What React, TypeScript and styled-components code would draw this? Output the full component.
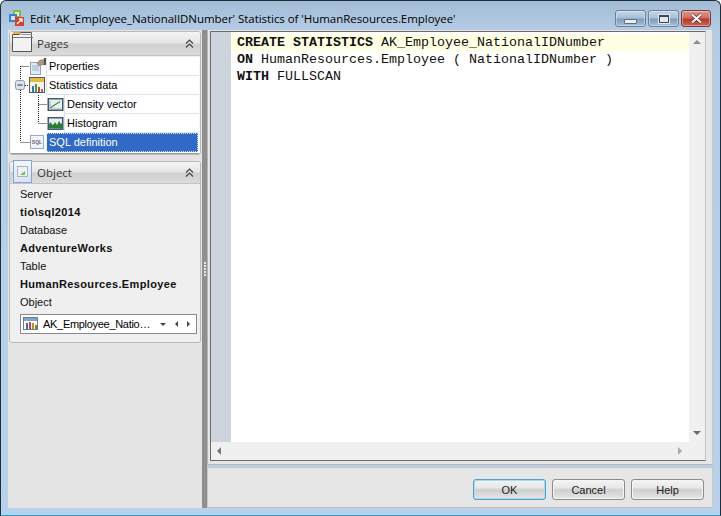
import React from "react";
import styled, { createGlobalStyle } from "styled-components";

const Global = createGlobalStyle`
  html, body { margin: 0; padding: 0; background: #fff; }
  * { box-sizing: border-box; }
`;

const UI = `"Liberation Sans", Arial, sans-serif`;

const Window = styled.div`
  width: 721px;
  height: 516px;
  display: flex;
  flex-direction: column;
  padding: 0 7px 7px;
  overflow: hidden;
  border: 1px solid #1c2f3a;
  border-bottom-color: #12a5c4;
  border-radius: 6px 6px 0 0;
  background: linear-gradient(180deg, #a3bcd6 0, #b4cce5 30px, #b9d1ea 100%);
  font-family: ${UI};
  font-size: 11px;
  color: #000;
`;
const TitleBar = styled.div`
  height: 29px;
  flex: none;
  display: flex;
  align-items: flex-start;
`;
const AppIcon = styled.svg`
  width: 16px;
  height: 16px;
  margin: 9px 5px 0 1px;
  flex: none;
`;
const TitleText = styled.div`
  flex: 1;
  margin-top: 10px;
  font-family: "Open Sans", sans-serif;
  font-size: 11.5px;
  line-height: 16px;
  white-space: nowrap;
  letter-spacing: -0.05px;
`;
const Caption = styled.div`
  display: flex;
  gap: 2px;
  margin: 9px 2px 0 0;
`;
const CaptionButton = styled.div<{ $close?: boolean }>`
  width: ${(p) => (p.$close ? 30 : 31)}px;
  height: 17px;
  display: flex;
  align-items: center;
  justify-content: center;
  border: 1px solid ${(p) => (p.$close ? "#7a3a3a" : "#6f8094")};
  border-radius: 3px;
  box-shadow: inset 0 0 0 1px rgba(255, 255, 255, 0.35);
  background: ${(p) =>
    p.$close
      ? "linear-gradient(180deg,#dd9a8f 0,#cf6f60 45%,#b33a2c 55%,#c9665a 100%)"
      : "linear-gradient(180deg,#c5d6e8 0,#a9c0d8 45%,#7f9dbc 55%,#a5bfd8 100%)"};
`;
const MinGlyph = styled.div`
  width: 13px;
  height: 5px;
  margin-top: 5px;
  background: #e9eef3;
  border: 1px solid #5d6e80;
  border-radius: 1px;
`;
const RestoreGlyph = styled.div`
  width: 10px;
  height: 8px;
  background: #dfe7ef;
  border: 1px solid #39485a;
  border-top-width: 2px;
  box-shadow: 0 0 0 1px #dfe7ef;
  position: relative;
`;

const Client = styled.div`
  flex: 1;
  min-height: 0;
  display: flex;
`;
const Sidebar = styled.div`
  width: 194px;
  flex: none;
  background: #e4e4e4;
  padding: 1px 1px 0 1px;
  display: flex;
  flex-direction: column;
  gap: 6px;
`;
const Splitter = styled.div`
  width: 5px;
  flex: none;
  background: #8f8f8f;
  display: flex;
  flex-direction: column;
  align-items: center;
  justify-content: center;
  gap: 1px;
`;
const Grip = styled.span`
  width: 2px;
  height: 2px;
  background: #e6e6e6;
`;
const Panel = styled.section`
  border: 1px solid #b9b9b9;
  border-radius: 3px;
  background: #efefef;
  box-shadow: inset 0 0 0 1px #f6f6f6;
`;
const PanelHead = styled.div<{ $h: number }>`
  height: ${(p) => p.$h}px;
  display: flex;
  align-items: center;
  position: relative;
  padding-left: 27px;
  font-family: "Open Sans", sans-serif;
  font-size: 11.5px;
  color: #33383f;
  background: linear-gradient(180deg, #f4f4f4 0, #e6e6e6 45%, #d0d0d0 55%, #dcdcdc 100%);
  border-bottom: 1px solid #c4c4c4;
  border-radius: 2px 2px 0 0;
`;
const HeadIcon = styled.svg`
  position: absolute;
  left: 1px;
  top: -1px;
`;
const ObjectTab = styled.div`
  position: absolute;
  left: 3px;
  top: -2px;
  width: 19px;
  height: 23px;
  border: 1px solid #7fa3d6;
  background: linear-gradient(180deg, #f4f7fb, #dbe3ef);
  display: flex;
  align-items: center;
  justify-content: center;
`;
const Chevrons = styled.svg`
  position: absolute;
  right: 5px;
  top: 50%;
  margin-top: -5px;
`;
const TreeWrap = styled.div`
  position: relative;
  margin: 1px 1px 0 1px;
  height: 97px;
  background: #fff;
  border-bottom: 1px solid #9a9a9a;
`;
const TreeLines = styled.svg`
  position: absolute;
  left: 0;
  top: 0;
  pointer-events: none;
`;
const TreeRow = styled.div<{ $level: number }>`
  height: 19px;
  padding-left: ${(p) => (p.$level ? 36 : 18)}px;
  display: flex;
  align-items: center;
`;
const RowIcon = styled.svg`
  width: 17px;
  height: 17px;
  flex: none;
`;
const RowText = styled.div<{ $selected?: boolean }>`
  flex: 1;
  align-self: stretch;
  display: flex;
  align-items: center;
  padding-left: 2px;
  margin-right: ${(p) => (p.$selected ? "1px" : "0")};
  line-height: 18px;
  border-left: 1px solid ${(p) => (p.$selected ? "#fff" : "#dce3ef")};
  border-bottom: 1px solid ${(p) => (p.$selected ? "transparent" : "#dce3ef")};
  color: ${(p) => (p.$selected ? "#fff" : "#000")};
  background: ${(p) => (p.$selected ? "#316ac5" : "#fff")};
  outline: ${(p) => (p.$selected ? "1px dotted #cfe0ff" : "none")};
  outline-offset: -1px;
`;
const ObjectBody = styled.div`
  padding: 1px 0 8px 10px;
  background: #efefef;
  border-radius: 0 0 3px 3px;
`;
const Label = styled.div<{ $bold?: boolean }>`
  height: 18px;
  line-height: 18px;
  color: #111;
  font-weight: ${(p) => (p.$bold ? 700 : 400)};
  letter-spacing: ${(p) => (p.$bold ? "0.35px" : "0")};
  font-size: 11px;
  white-space: nowrap;
`;
const Combo = styled.div`
  width: 177px;
  height: 20px;
  margin-top: 3px;
  border: 1px solid #8a8a8a;
  background: #fff;
  display: flex;
  align-items: center;
  padding: 0 3px 0 2px;
`;
const ComboText = styled.div`
  flex: 1;
  margin-left: 4px;
  white-space: nowrap;
  letter-spacing: -0.3px;
`;
const ComboArrows = styled.div`
  display: flex;
  align-items: center;
  gap: 9px;
  margin-right: 3px;
`;
const Tri = styled.i<{ $dir: "up" | "down" | "left" | "right"; $c?: string; $s?: number }>`
  display: block;
  width: 0;
  height: 0;
  border-style: solid;
  border-color: transparent;
  border-width: ${(p) => p.$s ?? 4}px;
  ${(p) => {
    const c = p.$c ?? "#444";
    if (p.$dir === "up") return `border-top-width:0;border-bottom-color:${c};`;
    if (p.$dir === "down") return `border-bottom-width:0;border-top-color:${c};`;
    if (p.$dir === "left") return `border-left-width:0;border-right-color:${c};`;
    return `border-right-width:0;border-left-color:${c};`;
  }}
`;

const Main = styled.div`
  flex: 1;
  min-width: 0;
  display: flex;
  flex-direction: column;
  gap: 2px;
`;
const EditorPanel = styled.div`
  height: 435px;
  flex: none;
  padding: 1px 6px 3px 2px;
  background: #e6e6e6;
  border-left: 1px solid #b5b5b5;
  border-right: 1px solid #c8c8c8;
  border-bottom: 1px solid #b5b5b5;
`;
const EditorFrame = styled.div`
  height: 100%;
  border: 1px solid #6b6b6b;
  border-right-color: #c0c0c0;
  background: #fff;
  display: grid;
  grid-template-columns: 1fr 16px;
  grid-template-rows: 1fr 18px;
`;
const CodeArea = styled.div`
  display: flex;
  min-height: 0;
  min-width: 0;
`;
const Gutter = styled.div`
  width: 20px;
  flex: none;
  background: #ced4de;
`;
const CodeBody = styled.div`
  flex: 1;
  padding-top: 2px;
  font-family: "Liberation Mono", "Courier New", monospace;
  font-size: 13.33px;
  color: #111;
`;
const CodeLine = styled.div<{ $active?: boolean }>`
  height: 17px;
  line-height: 17px;
  padding-left: 6px;
  white-space: pre;
  background: ${(p) => (p.$active ? "#ffffe3" : "transparent")};
  b { font-weight: 700; }
`;
const VScroll = styled.div`
  background: #f0f0f0;
  display: flex;
  flex-direction: column;
  justify-content: space-between;
  align-items: center;
  padding: 8px 0 7px;
`;
const HScroll = styled.div`
  background: #f0f0f0;
  display: flex;
  justify-content: space-between;
  align-items: center;
  padding: 0 7px 0 6px;
`;
const Corner = styled.div`
  background: #f0f0f0;
`;
const Footer = styled.div`
  flex: 1;
  display: flex;
  justify-content: flex-end;
  align-items: flex-start;
  gap: 6px;
  padding: 11px 8px 0 0;
  background: #e6e6e6;
  border: 1px solid #c8c8c8;
  border-bottom-color: #bdbdbd;
  border-radius: 2px;
`;
const Button = styled.div<{ $default?: boolean }>`
  width: 73px;
  height: 21px;
  display: flex;
  align-items: center;
  justify-content: center;
  border: 1px solid ${(p) => (p.$default ? "#5b9cc9" : "#8c8c8c")};
  border-radius: 3px;
  color: #222;
  font-size: 11px;
  background: linear-gradient(180deg, #f4f4f4 0, #e8e8e8 40%, #cfcfcf 52%, #dcdcdc 80%, #e8e8e8 100%);
  box-shadow: inset 0 0 0 1px ${(p) => (p.$default ? "#a6dcf4" : "#f5f5f5")};
`;

const Chev = () => (
  <Chevrons width="11" height="10" viewBox="0 0 11 10">
    <path d="M2 4.5 5.5 1 9 4.5M2 8.5 5.5 5 9 8.5" fill="none" stroke="#444" strokeWidth="1.2" />
  </Chevrons>
);
const Properties = () => (
  <RowIcon viewBox="0 0 17 17">
    <rect x="1.5" y="4.5" width="10" height="12" fill="#dfe8f5" stroke="#8fa3bd" />
    <path d="M3 8h7M3 10h7M3 12h7" stroke="#9db4d3" />
    <path d="M8 5l3-3h2l2-1v6h-3l-2 1z" fill="#b09a7e" stroke="#7a6a55" strokeWidth=".5" />
    <rect x="15" y="0" width="2" height="7" fill="#555" />
  </RowIcon>
);
const Stats = () => (
  <RowIcon viewBox="0 0 17 17">
    <rect x=".5" y=".5" width="15" height="15" fill="#f7f3e6" stroke="#4f5c6e" />
    <rect x="1" y="1" width="14" height="4" fill="#e8b93f" />
    <rect x="3" y="9" width="2" height="6" fill="#3d6fb0" />
    <rect x="6" y="7" width="2" height="8" fill="#4c9a4a" />
    <rect x="9" y="10" width="2" height="5" fill="#c9463d" />
    <rect x="12" y="12" width="2" height="3" fill="#7d7d7d" />
  </RowIcon>
);
const Density = () => (
  <RowIcon viewBox="0 0 17 17">
    <rect x=".5" y="2" width="16" height="13" fill="#3f5a73" />
    <rect x="2" y="3.5" width="13" height="10" fill="#e9eef2" />
    <path d="M3 12 13 5.5" stroke="#2f9a3c" strokeWidth="1.3" />
    <path d="M3 5v8h11" stroke="#a5a5a5" fill="none" />
  </RowIcon>
);
const Histogram = () => (
  <RowIcon viewBox="0 0 17 17">
    <rect x=".5" y="2" width="16" height="13" fill="#3f5a73" />
    <rect x="2" y="3.5" width="13" height="10" fill="#e9eef2" />
    <path d="M2 13.5V9l2-2 1 3 2-1 1-2 2 3 2-4 2 3 1-1v5.5z" fill="#2a7d32" />
  </RowIcon>
);
const Sql = () => (
  <RowIcon viewBox="0 0 17 17">
    <rect x="1.5" y="1.5" width="13" height="13" fill="#f0f4fb" stroke="#98a8c8" />
    <text x="8" y="10" fontSize="5" fontWeight="700" textAnchor="middle" fill="#666" fontFamily="Liberation Sans">SQL</text>
  </RowIcon>
);

export default function App() {
  return (
    <>
      <Global />
      <Window>
        <TitleBar>
          <AppIcon viewBox="0 0 16 16">
            <rect x="4" y="0" width="8" height="8" fill="#7bbf3f" />
            <rect x="6" y="2" width="4" height="4" fill="#dff0c8" />
            <rect x="0" y="4" width="8" height="8" fill="#3a7fd0" />
            <rect x="2" y="6" width="4" height="4" fill="#cfe2f7" />
            <rect x="6" y="7" width="9" height="9" fill="#d8402a" />
            <path d="M8 14l5-5M10 9h3v3" stroke="#fff" strokeWidth="1.3" fill="none" />
          </AppIcon>
          <TitleText>Edit 'AK_Employee_NationalIDNumber' Statistics of 'HumanResources.Employee'</TitleText>
          <Caption>
            <CaptionButton><MinGlyph /></CaptionButton>
            <CaptionButton><RestoreGlyph /></CaptionButton>
            <CaptionButton $close>
              <svg width="15" height="11" viewBox="0 0 15 11">
                <path d="M3 1.5 12 9.5M12 1.5 3 9.5" stroke="#5a2a2a" strokeWidth="3.4" />
                <path d="M3 1.5 12 9.5M12 1.5 3 9.5" stroke="#f4f4f4" strokeWidth="2.2" />
              </svg>
            </CaptionButton>
          </Caption>
        </TitleBar>
        <Client>
          <Sidebar>
            <Panel>
              <PanelHead $h={24}>
                <HeadIcon width="24" height="22" viewBox="0 0 24 22">
                  <path d="M1.5 20.5V3.5h7l1-2h11v19z" fill="#f2f2f2" stroke="#555" />
                  <path d="M2 6.5h20" stroke="#777" />
                  <path d="M10 3.5h11" stroke="#999" />
                  <path d="M2 2h7" stroke="#e0b040" strokeWidth="2" />
                </HeadIcon>
                Pages
                <Chev />
              </PanelHead>
              <TreeWrap>
                <TreeLines width="50" height="96">
                  <g stroke="#222" strokeDasharray="1 1" fill="none">
                    <path d="M9.5 9V85M9.5 9.5H18" />
                    <path d="M14 28.5H18" />
                    <path d="M9.5 85.5H19" />
                    <path d="M27.5 38V66M27.5 47.5H36M27.5 66.5H36" />
                  </g>
                  <rect x="4.5" y="23.5" width="9" height="9" rx="2" fill="#dfe4ec" stroke="#8b97a8" />
                  <path d="M6.5 28h5" stroke="#333" />
                </TreeLines>
                <TreeRow $level={0}><Properties /><RowText>Properties</RowText></TreeRow>
                <TreeRow $level={0}><Stats /><RowText>Statistics data</RowText></TreeRow>
                <TreeRow $level={1}><Density /><RowText>Density vector</RowText></TreeRow>
                <TreeRow $level={1}><Histogram /><RowText>Histogram</RowText></TreeRow>
                <TreeRow $level={0}><Sql /><RowText $selected>SQL definition</RowText></TreeRow>
              </TreeWrap>
            </Panel>
            <Panel>
              <PanelHead $h={22}>
                <ObjectTab>
                  <svg width="11" height="11" viewBox="0 0 11 11">
                    <rect x=".5" y=".5" width="10" height="10" fill="#eef1f5" stroke="#a9b4c2" />
                    <path d="M3 9 8 5v4z" fill="#6cc24a" />
                  </svg>
                </ObjectTab>
                Object
                <Chev />
              </PanelHead>
              <ObjectBody>
                <Label>Server</Label>
                <Label $bold>tio\sql2014</Label>
                <Label>Database</Label>
                <Label $bold>AdventureWorks</Label>
                <Label>Table</Label>
                <Label $bold>HumanResources.Employee</Label>
                <Label>Object</Label>
                <Combo>
                  <svg width="16" height="14" viewBox="0 0 16 14">
                    <rect x=".5" y=".5" width="14" height="12" fill="#fff" stroke="#6d7a8c" />
                    <rect x="1" y="1" width="13" height="3" fill="#7aa6d8" />
                    <rect x="3" y="6" width="2" height="6" fill="#3d6fb0" />
                    <rect x="6" y="5" width="2" height="7" fill="#c9463d" />
                    <rect x="9" y="6" width="2" height="6" fill="#d9822b" />
                    <rect x="12" y="8" width="2" height="4" fill="#4c9a4a" />
                  </svg>
                  <ComboText>AK_Employee_Natio…</ComboText>
                  <ComboArrows>
                    <Tri $dir="down" $s={3} />
                    <Tri $dir="left" $s={3} />
                    <Tri $dir="right" $s={3} />
                  </ComboArrows>
                </Combo>
              </ObjectBody>
            </Panel>
          </Sidebar>
          <Splitter>
            <Grip /><Grip /><Grip /><Grip /><Grip />
          </Splitter>
          <Main>
            <EditorPanel>
              <EditorFrame>
                <CodeArea>
                  <Gutter />
                  <CodeBody>
                    <CodeLine $active><b>CREATE STATISTICS</b> AK_Employee_NationalIDNumber</CodeLine>
                    <CodeLine><b>ON</b> HumanResources.Employee ( NationalIDNumber )</CodeLine>
                    <CodeLine><b>WITH</b> FULLSCAN</CodeLine>
                  </CodeBody>
                </CodeArea>
                <VScroll>
                  <Tri $dir="up" $c="#8a8a8a" $s={4} />
                  <Tri $dir="down" $c="#6a6a6a" $s={4} />
                </VScroll>
                <HScroll>
                  <Tri $dir="left" $c="#777" $s={4} />
                  <Tri $dir="right" $c="#aaa" $s={4} />
                </HScroll>
                <Corner />
              </EditorFrame>
            </EditorPanel>
            <Footer>
              <Button $default>OK</Button>
              <Button>Cancel</Button>
              <Button>Help</Button>
            </Footer>
          </Main>
        </Client>
      </Window>
    </>
  );
}
